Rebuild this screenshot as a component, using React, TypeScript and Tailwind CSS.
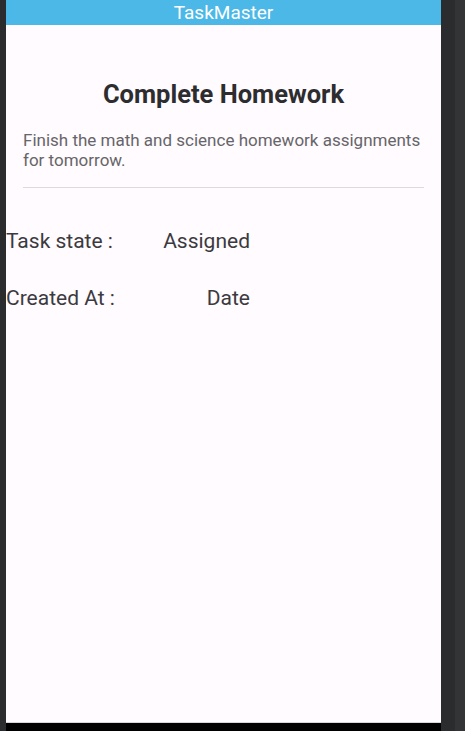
const rows = [
  { label: "Task state :", value: "Assigned" },
  { label: "Created At :", value: "Date" },
];

export default function App() {
  return (
    <div className="flex h-[731px] w-[465px] bg-[#2d2e30] font-['Roboto',sans-serif]">
      <div className="w-[6px] shrink-0 bg-[#2b2c2e]" />
      <div className="flex w-[435px] shrink-0 flex-col bg-[#fffbfe]">
        <div className="flex h-[25px] items-center justify-center bg-[#4cb8e8] text-[19px] leading-none text-white">
          TaskMaster
        </div>
        <div className="flex-1">
          <div className="px-[17px]">
            <h1 className="mt-[50px] text-center text-[25.5px] font-bold text-[#2d2d2f]">
              Complete Homework
            </h1>
            <p className="mt-[17px] text-[17px] leading-[20px] text-[#666569]">
              Finish the math and science homework assignments for tomorrow.
            </p>
            <div className="mt-[17px] h-px bg-[#dcdadd]" />
          </div>
          <div className="mt-[38px] flex flex-col gap-[25px]">
            {rows.map((r) => (
              <div key={r.label} className="flex w-[244px] justify-between text-[21px] text-[#3b3a3e]">
                <span>{r.label}</span>
                <span>{r.value}</span>
              </div>
            ))}
          </div>
        </div>
        <div className="h-[9px] border-t border-[#d8d6da] bg-black" />
      </div>
      <div className="flex flex-1">
        <div className="w-[14px] bg-[#2b2c2e]" />
        <div className="flex-1 bg-[#333436]" />
      </div>
    </div>
  );
}
